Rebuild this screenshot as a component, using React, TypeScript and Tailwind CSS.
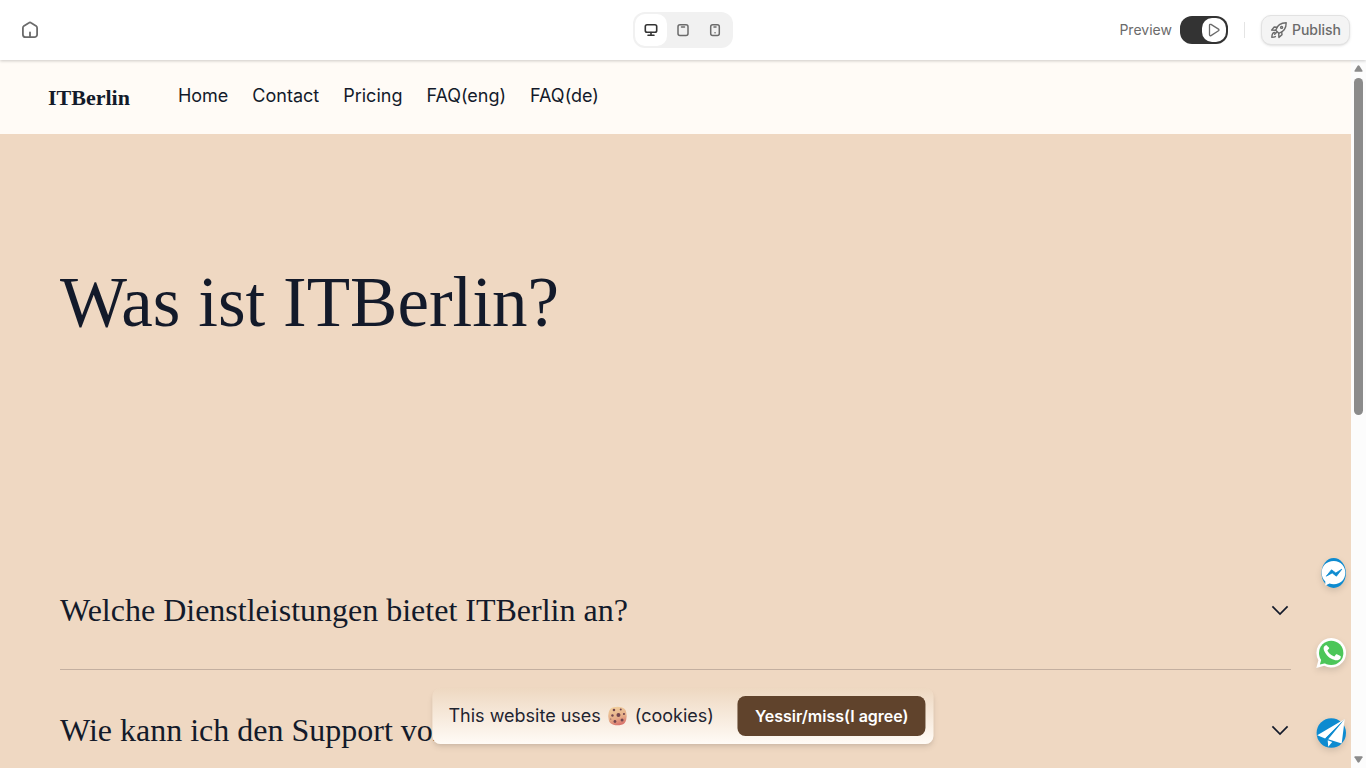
import React from 'react';

const navLinks = ['Home', 'Contact', 'Pricing', 'FAQ(eng)', 'FAQ(de)'];

const questions = [
  'Welche Dienstleistungen bietet ITBerlin an?',
  'Wie kann ich den Support von ITBerlin kontaktieren?',
];

const HomeIcon = () => (
  <svg width="18" height="18" viewBox="0 0 18 18" fill="none" stroke="#6b6b6b" strokeWidth="1.8" strokeLinejoin="round" strokeLinecap="round">
    <path d="M1.9 6.9c0-.8.4-1.5 1-2L7.700 1.900a2.300 2.300 0 0 1 2.600 0L15.100 4.900c.6.500 1 1.200 1 2v6.500a2.700 2.700 0 0 1-2.700 2.700H4.600a2.700 2.700 0 0 1-2.700-2.700z" />
    <path d="M9 11.500v4" />
  </svg>
);

const DesktopIcon = () => (
  <svg width="14" height="14" viewBox="0 0 14 14" fill="none" stroke="#333333" strokeWidth="1.600" strokeLinecap="round">
    <rect x="1.300" y="1.700" width="11.400" height="7.600" rx="1.800" />
    <path d="M7 9.500v2.500M4 12.300h6" />
  </svg>
);

const TabletIcon = () => (
  <svg width="14" height="14" viewBox="0 0 14 14" fill="none" stroke="#6b6b6b" strokeWidth="1.500" strokeLinecap="round">
    <rect x="2" y="1.700" width="10" height="10.800" rx="2" />
    <path d="M5.500 4h3" />
  </svg>
);

const MobileIcon = () => (
  <svg width="14" height="14" viewBox="0 0 14 14" fill="none" stroke="#6b6b6b" strokeWidth="1.500" strokeLinecap="round">
    <rect x="2.700" y="1.700" width="8.600" height="10.800" rx="2" />
    <path d="M6 4h2M7 9.700h.1" />
  </svg>
);

const PlayIcon = () => (
  <svg width="14" height="14" viewBox="0 0 14 14" fill="none" stroke="#6b6b6b" strokeWidth="1.300" strokeLinejoin="round">
    <path d="M2.500 2.300c0-.8.8-1.200 1.500-.9l7.500 4.700c.6.400.6 1.300 0 1.700L4 12.600c-.7.400-1.500 0-1.500-.8z" />
  </svg>
);

const RocketIcon = () => (
  <svg width="18" height="18" viewBox="0 0 18 18" fill="none" stroke="#6b6b6b" strokeWidth="1.400" strokeLinecap="round" strokeLinejoin="round">
    <path d="M5.700 9.200C7 5 10.500 1.800 16.200 1.800c0 5.600-3.100 9.300-7.400 10.500z" />
    <path d="M6.800 6.300 4.200 6 1.600 9.100l4 .2M11.700 11.200l.3 2.600-3.100 2.600-.2-4" />
    <circle cx="11.600" cy="6.400" r="1" />
    <path d="M4.700 11.500c-1.800 0-2.700 1.300-2.900 4.700 1.600 0 2.700-.1 3.600-.6M4.700 13.200l2-2" />
  </svg>
);

const ChevronIcon = () => (
  <svg width="18" height="12" viewBox="0 0 18 12" fill="none" stroke="#131a2a" strokeWidth="1.700">
    <path d="M1.400 2.400 9 10 16.600 2.400" />
  </svg>
);

const CookieIcon = () => (
  <svg width="20" height="20" viewBox="0 0 20 20" role="img" aria-label="cookie">
    <defs>
      <linearGradient id="dough" x1="0.3" y1="0" x2="0.6" y2="1">
        <stop offset="0" stopColor="#f1cf9d" />
        <stop offset="0.6" stopColor="#e5ac88" />
        <stop offset="1" stopColor="#d8706a" />
      </linearGradient>
    </defs>
    <path d="M6 1.300Q10 .2 14 1.300T18.700 6Q19.800 10 18.700 14T14 18.700Q10 19.800 6 18.700T1.300 14Q.2 10 1.300 6T6 1.300z" fill="url(#dough)" />
    <g fill="#72454d">
      <circle cx="6.500" cy="4" r="1.300" />
      <circle cx="13.300" cy="3.500" r="1" />
      <circle cx="11" cy="9" r="2" />
      <circle cx="5" cy="9.500" r="1.200" />
      <circle cx="16.500" cy="8" r="1.100" />
      <circle cx="14.600" cy="14" r="1.500" />
      <circle cx="7.500" cy="15.500" r="1.400" />
      <circle cx="3.300" cy="13" r=".6" />
    </g>
  </svg>
);

const MessengerIcon = () => (
  <svg width="30" height="30" viewBox="0 0 30 30">
    <ellipse cx="17.700" cy="15" rx="12.200" ry="15" fill="#0e8bd0" />
    <path d="M17.700 3C10.500 3 5.700 8 5.700 14.700c0 3.900 1.300 6.600 3.600 8.700v4.200l4.200-2c1.300.4 2.700.6 4.200.6 7.200 0 11.600-5 11.600-11.500S24.900 3 17.700 3z" fill="#fff" />
    <path d="m10.300 18.200 5.200-6.400 4.300 3.200 6-3.800-5.400 7-4.200-3.300z" fill="#0e8bd0" stroke="#0e8bd0" strokeWidth=".8" strokeLinejoin="round" />
  </svg>
);

const WhatsAppIcon = () => (
  <svg width="30" height="30" viewBox="0 0 30 30">
    <path d="M15.200 0A14.800 14.800 0 0 0 2.400 22.200L.3 29.900l7.900-2.100A14.800 14.800 0 1 0 15.200 0z" fill="#fff" />
    <circle cx="15.200" cy="14.900" r="12.200" fill="#4cc659" />
    <path d="m3.900 26.400 1.800-6.500 4.700 5z" fill="#4cc659" />
    <path d="M11.300 8c-.4-.8-.7-.8-1.200-.8-1.200 0-2.500 1.300-2.500 3.400 0 2 1.500 4 1.700 4.300.2.300 2.900 4.600 7.200 6.300 3.600 1.400 4.300 1.100 5.100 1 .8-.1 2.500-1 2.900-2 .3-1 .3-1.800.2-2-.1-.2-.4-.3-.8-.5l-3-1.400c-.4-.2-.7-.2-1 .2l-1.300 1.700c-.3.300-.5.300-.9.100-.5-.2-1.900-.7-3.600-2.200-1.300-1.200-2.200-2.700-2.500-3.100-.3-.5 0-.7.200-.9l1.300-1.500c.1-.3.100-.5 0-.8z" fill="#fff" />
  </svg>
);

const TelegramIcon = () => (
  <svg width="30" height="30" viewBox="0 0 30 30">
    <circle cx="15.300" cy="15" r="14.700" fill="#0e8bd0" />
    <path d="M28.700 1 1.200 17.300l8 3.300z" fill="#fff" />
    <path d="m28.700 1-16.500 20.200 13.500 4.300z" fill="#fff" />
    <path d="m11.700 22.300 4.500 1.700-4 4.800z" fill="#fff" />
    <path d="M28.700 1 9.200 20.600l2 .5z" fill="#0e8bd0" />
  </svg>
);

const EditorBar = () => (
  <header className="relative z-20 grid h-[60px] shrink-0 grid-cols-3 items-center bg-white px-4 font-['Inter',sans-serif] shadow-[0_1px_3px_rgba(0,0,0,0.2)]">
    <button aria-label="Home" className="flex h-7 w-7 items-center justify-center">
      <HomeIcon />
    </button>
    <div className="flex h-9 w-[100px] items-center justify-self-center rounded-xl bg-[#f1f1f1] p-0.5">
      <button aria-label="Desktop" className="flex h-8 w-8 items-center justify-center rounded-[10px] bg-white">
        <DesktopIcon />
      </button>
      <button aria-label="Tablet" className="flex h-8 w-8 items-center justify-center">
        <TabletIcon />
      </button>
      <button aria-label="Mobile" className="flex h-8 w-8 items-center justify-center">
        <MobileIcon />
      </button>
    </div>
    <div className="flex items-center justify-end">
      <span className="mr-2 text-sm text-[#6b6b6b]">Preview</span>
      <button role="switch" aria-checked="true" aria-label="Preview" className="flex h-7 w-12 items-center justify-end rounded-xl bg-[#333333] p-0.5">
        <span className="flex h-6 w-6 items-center justify-center rounded-[10px] bg-white">
          <PlayIcon />
        </span>
      </button>
      <div className="mx-4 h-4 w-px bg-[#e4e4e4]" />
      <button className="flex h-[30px] items-center gap-1 rounded-[10px] border border-[#e2e2e2] bg-[#f4f4f4] px-2 text-sm font-medium text-[#6b6b6b] shadow-sm">
        <RocketIcon />
        Publish
      </button>
    </div>
  </header>
);

const SiteNav = () => (
  <nav className="flex h-[74px] items-center gap-12 bg-[#fffbf6] px-12 text-[#131a2a]">
    <a href="#" className="font-['Liberation_Serif',serif] text-[22px] font-bold">ITBerlin</a>
    <div className="flex gap-6 pb-0.5 font-['Inter',sans-serif] text-lg">
      {navLinks.map((link) => (
        <a key={link} href="#">{link}</a>
      ))}
    </div>
  </nav>
);

const CookieBanner = () => (
  <div className="absolute bottom-6 left-1/2 flex h-14 -translate-x-1/2 items-center gap-6 rounded-lg bg-linear-to-b from-[#eed8c1] to-[#fffbf6] pl-4 pr-2 font-['Inter',sans-serif] whitespace-nowrap shadow-md">
    <p className="flex items-center gap-[7px] text-lg text-[#1f2430]">
      This website uses
      <CookieIcon />
      (cookies)
    </p>
    <button className="h-10 rounded-lg bg-[#60432c] px-[17px] text-base font-semibold text-white">
      Yessir/miss(I agree)
    </button>
  </div>
);

const SocialLinks = () => (
  <div className="absolute right-5 bottom-5 flex flex-col items-end gap-[50px]">
    <a href="#" aria-label="Messenger" className="drop-shadow-md"><MessengerIcon /></a>
    <a href="#" aria-label="WhatsApp" className="drop-shadow-md"><WhatsAppIcon /></a>
    <a href="#" aria-label="Telegram" className="drop-shadow-md"><TelegramIcon /></a>
  </div>
);

const ScrollRail = () => (
  <div className="flex w-[15px] shrink-0 flex-col items-center bg-[#fcfcfc] py-1">
    <svg width="9" height="9" viewBox="0 0 10 9" fill="#8b8b8b"><path d="M4 1.500q1-1 2 0L9.500 7q.3 1-.7 1H1.200q-1 0-.7-1z" /></svg>
    <div className="mt-[5px] h-[337px] w-[9px] rounded-full bg-[#8b8b8b]" />
    <svg className="mt-auto" width="9" height="9" viewBox="0 0 10 9" fill="#8b8b8b"><path d="M4 7.500q1 1 2 0L9.500 2q.3-1-.7-1H1.200q-1 0-.7 1z" /></svg>
  </div>
);

export default function App() {
  return (
    <div className="flex h-screen flex-col overflow-hidden">
      <EditorBar />
      <div className="relative flex min-h-0 flex-1">
        <div className="min-w-0 flex-1 overflow-hidden bg-[#efd8c2]">
          <SiteNav />
          <main className="px-[60px] font-['Liberation_Serif',serif] text-[#131a2a]">
            <h1 className="pt-32 pb-52 text-[71px] leading-[80px]">Was ist ITBerlin?</h1>
            {questions.map((question) => (
              <button key={question} className="flex h-[120px] w-full items-center justify-between border-b border-[#c3afa0] pr-0.5 text-left text-[32px] leading-10">
                {question}
                <ChevronIcon />
              </button>
            ))}
          </main>
        </div>
        <ScrollRail />
        <CookieBanner />
        <SocialLinks />
      </div>
    </div>
  );
}
